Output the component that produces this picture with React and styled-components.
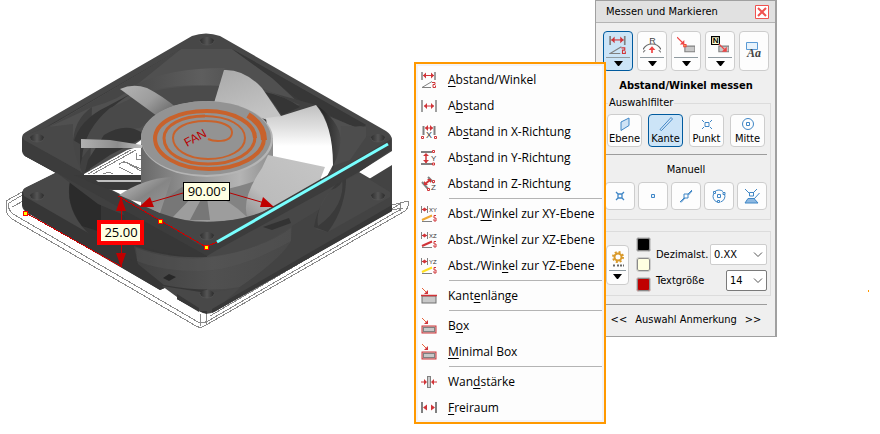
import React, { useState } from 'react';
import styled, { createGlobalStyle } from 'styled-components';

const GlobalStyle = createGlobalStyle`
    * { box-sizing: border-box; }
    body {
        margin: 0;
        background: #fff;
        color: #000;
        font-family: "DejaVu Sans Condensed", "DejaVu Sans", sans-serif;
        font-size: 11px;
        line-height: 16px;
    }
    button, select { font: inherit; color: inherit; }
`

const Workspace = styled.div`
    display: flex;
    align-items: flex-start;
    min-height: 100vh;
`

const Viewport = styled.main`
    flex: 1;
    min-width: 0;
`

const Model = styled.svg`
    display: block;
    width: 412px;
    max-width: 100%;
`

const Gutter = styled.div`
    width: 103px;
    padding: 289px 0 0 91px;
    line-height: 0;
`

const Panel = styled.aside`
    position: relative;
    width: 182px;
    background: #efefef;
    border: 1px solid #a0a0a0;
    border-right-width: 2px;
`

const TitleBar = styled.header`
    display: flex;
    align-items: center;
    justify-content: space-between;
    height: 22px;
    padding: 0 6px 0 10px;
    background: #e1e1e1;
    border-bottom: 1px solid #b4b4b4;
`

const CloseButton = styled.button`
    display: flex;
    padding: 0;
    border: none;
    background: none;
`

const PanelBody = styled.div`
    padding: 8px 4px 8px 5px;
`

const Toolbar = styled.div`
    display: flex;
    gap: 4px;
    padding: 0 2px;
`

const PushButton = styled.button`
    display: flex;
    flex-direction: column;
    align-items: center;
    justify-content: center;
    flex: ${props => props.$width ? 'none' : 1};
    width: ${props => props.$width || 'auto'};
    height: ${props => props.$height};
    min-width: 0;
    padding: 0;
    border: 1px solid ${props => props.$active ? '#005a9e' : '#cdcdcd'};
    border-radius: 4px;
    background: ${props => props.$active ? '#cce4f7' : '#fdfdfd'};
    line-height: 14px;
`

const Split = styled.span`
    display: flex;
    justify-content: center;
    width: calc(100% - 4px);
    margin-top: 3px;
    padding-top: 3px;
    border-top: 1px solid #8f9aa0;
`

const Heading = styled.h2`
    margin: 7px 0 3px;
    font-size: 11px;
    line-height: 16px;
    text-align: center;
`

const Group = styled.fieldset`
    min-width: 0;
    margin: 0;
    padding: ${props => props.$padding};
    border: 1px solid #dcdcdc;
`

const Legend = styled.legend`
    margin-left: 3px;
    padding: 0 1px;
    line-height: 12px;
`

const ButtonRow = styled.div`
    display: flex;
    gap: ${props => props.$gap};
    padding: 0 ${props => props.$inset || '0'};
`

const Rule = styled.hr`
    height: 1px;
    margin: ${props => props.$margin};
    border: none;
    background: #9c9c9c;
`

const SubHeading = styled.div`
    margin-bottom: 4px;
    text-align: center;
`

const Settings = styled(Group)`
    display: flex;
    align-items: center;
    gap: 7px;
    margin-top: 11px;
`

const Swatches = styled.div`
    display: flex;
    flex-direction: column;
    gap: 5px;
`

const Swatch = styled.button`
    width: 15px;
    height: 15px;
    padding: 0;
    border: 1px solid #cdcdcd;
    border-radius: 3px;
    background: ${props => props.$color};
    box-shadow: inset 0 0 0 1px #8a8a8a;
`

const Fields = styled.div`
    display: flex;
    flex: 1;
    flex-direction: column;
    align-self: flex-end;
    gap: 5px;
    padding-bottom: 1px;
    margin-left: -2px;
`

const Field = styled.div`
    display: flex;
    align-items: center;
    justify-content: space-between;
`

const SelectBox = styled.span`
    position: relative;
    display: flex;
    width: ${props => props.$width};

    svg {
        position: absolute;
        top: 8px;
        right: 4px;
        pointer-events: none;
    }
`

const Select = styled.select`
    appearance: none;
    width: 100%;
    height: 21px;
    padding: 0 0 0 3px;
    border: 1px solid ${props => props.$strong ? '#7a7a7a' : '#cdcdcd'};
    border-radius: 2px;
    background: #fff;
`

const Footer = styled.footer`
    display: flex;
    align-items: center;
    justify-content: center;
    gap: 8px;
`

const PlainButton = styled.button`
    padding: 0;
    border: none;
    background: none;
`

const Menu = styled.div`
    position: absolute;
    top: 61px;
    right: 169px;
    width: 192px;
    padding: 3px 0 1px;
    border: 2px solid #ff9900;
    background: #fdfdfd;
    box-shadow: inset 0 0 0 2px #f3f3f7;
    font-family: "Open Sans", "Noto Sans", sans-serif;
    font-size: 12px;
`

const MenuItem = styled.button`
    display: flex;
    align-items: center;
    gap: 11px;
    width: 100%;
    height: 26px;
    padding: 0 5px;
    border: none;
    background: none;
    text-align: left;
    white-space: nowrap;

    u { text-underline-offset: 2px; }
`

const Separator = styled.div`
    height: 4px;
    margin: 0 2px 0 33px;
    background: linear-gradient(#b4b4b4, #b4b4b4) 0 1px / 100% 1px no-repeat;
`

const red = '#d13438';
const grey = '#808080';
const blue = '#3f86c6';

function Icon({ size = 16, children }) {
    return (
        <svg width={size} height={size} viewBox="0 0 16 16" fill="none" stroke={grey} aria-hidden="true">
            {children}
        </svg>
    );
}

function Letter({ x, y, size = 8, color = '#444', children, ...rest }) {
    return (
        <text x={x} y={y} fontSize={size} fill={color} stroke="none" fontFamily="Liberation Sans, sans-serif" {...rest}>
            {children}
        </text>
    );
}

function DownArrow() {
    return <svg width="9" height="5" aria-hidden="true"><path d="M0 0h9L5 5H4z" fill="#000" /></svg>;
}

function Chevron() {
    return <svg width="10" height="6" aria-hidden="true"><path d="M1 .5L5 4.5 9 .5" fill="none" stroke="#555" /></svg>;
}

// double headed arrow between two limits
function Span({ y = 4.5, a = 2, b = 13 }) {
    return (
        <>
            <path d={`M${a} ${y}H${b}`} stroke={red} />
            <path d={`M${a} ${y}l3-3v6zM${b} ${y}l-3-3v6z`} fill={red} stroke="none" />
        </>
    );
}

function AngleIcon({ size }) {
    return (
        <Icon size={size}>
            <path d="M1 0v8M14 0v8" strokeWidth="1.5" />
            <Span y={3.5} a={2} b={13} />
            <path d="M11 9.5L1 15.5H10" />
            <path d="M11 10.5h3v2h-2v3h2.5v-2" stroke={red} />
        </Icon>
    );
}

function DistanceIcon() {
    return (
        <Icon>
            <path d="M1 2v12M15 2v12" strokeWidth="1.5" />
            <Span y={8} a={3} b={13} />
        </Icon>
    );
}

function XIcon() {
    return (
        <Icon>
            <path d="M2.5 2v9M13.5 2v9" strokeWidth="2" />
            <Span y={4} a={4} b={12} />
            <Letter x={5} y={14} size={9}>X</Letter>
            <path d="M.5 12.5h2v2h-2zM13.5 12.5h2v2h-2z" fill="#fff" stroke={red} />
        </Icon>
    );
}

function YIcon() {
    return (
        <Icon>
            <path d="M0 2h11M0 14h11" strokeWidth="2" />
            <path d="M5 4v9" stroke={red} strokeWidth="1.5" />
            <path d="M5 3l3 3H2zM5 13l3-3H2z" fill={red} stroke="none" />
            <Letter x={10} y={11} size={8}>Y</Letter>
            <path d="M11.5 .5h2v2h-2zM11.5 13h2v2h-2z" fill="#fff" stroke={red} />
        </Icon>
    );
}

function ZIcon() {
    return (
        <Icon>
            <path d="M1 6l7 8M7 1l6 6" strokeWidth="2" />
            <path d="M4 8l5-4" stroke={red} strokeWidth="2" />
            <path d="M3 5v4h4zM6 3h4v4z" fill={red} stroke="none" />
            <Letter x={10} y={14} size={8}>Z</Letter>
            <path d="M11.5 4.5h2v2h-2zM6.5 12.5h2v2h-2z" fill="#fff" stroke={red} />
        </Icon>
    );
}

function PlaneIcon({ axes, color }) {
    return (
        <Icon>
            <path d="M.5 0v7M6.5 0v7" />
            <path d="M1 3.5h5" stroke={red} />
            <path d="M1 3.5l2.5-2v4zM6 3.5l-2.5-2v4z" fill={red} stroke="none" />
            <Letter x={8} y={6} size={6} color="#333">{axes}</Letter>
            <path d="M1 14L11 9.5" stroke={color} strokeWidth="2" />
            <path d="M1 15.5h10" />
            <path d="M15 9.5h-2v2.5h2v3h-2v-2" stroke={red} />
        </Icon>
    );
}

function BoxIcon({ outline }) {
    return (
        <Icon>
            <path d="M1 0l5 5" stroke="#e8643c" />
            <path d="M7 6H3l4-4z" fill={red} stroke="none" />
            <rect x="1" y="8" width="14" height="7" fill="#c8c8c8" stroke={outline ? red : '#707070'} />
            {outline ? <rect x="2.5" y="9.5" width="11" height="4" /> : <path d="M0 7.5h16" stroke={red} strokeWidth="1.5" />}
        </Icon>
    );
}

function WallIcon() {
    return (
        <Icon>
            <rect x="6.5" y="2.5" width="3" height="11" fill="#ccc" />
            <path d="M0 8h4M12 8h4" stroke={red} />
            <path d="M6 8L3 5v6zM10 8l3-3v6z" fill={red} stroke="none" />
        </Icon>
    );
}

function GapIcon() {
    return (
        <Icon>
            <path d="M1 2v11M15 2v11" strokeWidth="2" />
            <path d="M2 7.5l4-3v6zM14 7.5l-4-3v6z" fill={red} stroke="none" />
        </Icon>
    );
}

function RadiusIcon() {
    return (
        <Icon size={18}>
            <Letter x={5.5} y={7}>R</Letter>
            <path d="M0 12a9 9 0 0 1 16 0" stroke="#666" />
            <path d="M8 15v-4" stroke="#ef4444" strokeWidth="1.5" />
            <path d="M8 9l3 3.5H5z" fill="#ef4444" stroke="none" />
            <path d="M0 14.5l2-2M16 14.5l-2-2" />
        </Icon>
    );
}

function PointNoteIcon({ flag }) {
    return (
        <Icon size={18}>
            <path d="M7 9h9v5H7z" fill="#c8c8c8" />
            {flag ? (
                <>
                    <path d="M.5 .5h7v7h-7z" fill="#ffffd0" stroke="#000" />
                    <Letter x={1.5} y={6.5} size={7} color="#000" fontWeight="bold">N</Letter>
                    <path d="M7 7l5 5" stroke="#ef4444" />
                    <path d="M14 14H9.5L14 9.5z" fill="#ef4444" stroke="none" />
                </>
            ) : (
                <>
                    <path d="M0 1l5 5" stroke="#ef4444" />
                    <path d="M6.5 7.5H2.5l4-4z" fill="#ef4444" stroke="none" />
                    <path d="M6 7.5h2v2H6z" fill="#ffd34d" stroke="#ef4444" />
                </>
            )}
        </Icon>
    );
}

function LabelIcon() {
    return (
        <svg width="20" height="20" fill="none" aria-hidden="true">
            <path d="M2.5 1.5h11v7h-11z" fill="#e8f3fc" stroke="#5b9bd5" />
            <Letter x={3} y={16} size={12} fontFamily="Liberation Serif, serif" fontWeight="bold" fontStyle="italic">Aa</Letter>
        </svg>
    );
}

const filterIcons = {
    Ebene: <path d="M4 6l8-4v7.5l-8 5z" fill="#cfe3f5" stroke={blue} />,
    Kante: <path d="M2 13.5L13 1.5l1.5 1.5L3.5 14.5z" fill="#dbeaf8" stroke={blue} />,
    Punkt: <path d="M6 6.5h4v4H6zM3 4l2 2M13 4L11 6M3 13l2-2M13 13L11 11" stroke={blue} />,
    Mitte: <path d="M6.5 6.5h3v3h-3zM8 2.5a5.5 5.5 0 1 1 0 11a5.5 5.5 0 1 1 0-11z" stroke={blue} />,
};

const manualIcons = [
    ['Schnittpunkt', <path d="M6 6h4v4H6zM4 4l2 2M12 4l-2 2M4 12l2-2M12 12l-2-2" stroke={blue} strokeWidth="1.3" />],
    ['Punkt', <path d="M6.5 6.5h3v3h-3z" stroke={blue} fill="#e8f3fc" />],
    ['Mittelpunkt', <path d="M6 6h4v4H6zM2 14l4-4M3 14.5l4-4.5M10 6l4-4M10.5 7L14 3" stroke={blue} />],
    ['Kreismitte', <path d="M6.5 6.5h3v3h-3zM4 3.5a6 6 0 0 1 8 0M13.5 6a6 6 0 0 1-4 8M6 14A6 6 0 0 1 2.5 6M2.5 3.5h2v2h-2zM12 4.5h2v2h-2zM6.5 12.5h2v2h-2z" stroke={blue} />],
    ['Projektion', (
        <>
            <path d="M1 1l4 4M13 1l-4 4M5.5 4.5h4v3.5h-4zM15.5 5L10 11" stroke={blue} />
            <path d="M4 10.5h6l4 4.5H1z" fill="#8db9e2" stroke={blue} />
        </>
    )],
];

// mnemonic letter is the middle entry of the label
const menuGroups = [
    [
        [<AngleIcon />, ['', 'A', 'bstand/Winkel']],
        [<DistanceIcon />, ['A', 'b', 'stand']],
        [<XIcon />, ['Ab', 's', 'tand in X-Richtung']],
        [<YIcon />, ['Abs', 't', 'and in Y-Richtung']],
        [<ZIcon />, ['Absta', 'n', 'd in Z-Richtung']],
    ],
    [
        [<PlaneIcon axes="XY" color="#f0a830" />, ['Abst./', 'W', 'inkel zur XY-Ebene']],
        [<PlaneIcon axes="XZ" color="#d13438" />, ['Abst./W', 'i', 'nkel zur XZ-Ebene']],
        [<PlaneIcon axes="YZ" color="#ffe020" />, ['Abst./Win', 'k', 'el zur YZ-Ebene']],
    ],
    [
        [<BoxIcon />, ['Kant', 'e', 'nlänge']],
    ],
    [
        [<BoxIcon outline />, ['B', 'o', 'x']],
        [<BoxIcon outline />, ['', 'M', 'inimal Box']],
    ],
    [
        [<WallIcon />, ['Wan', 'd', 'stärke']],
        [<GapIcon />, ['', 'F', 'reiraum']],
    ],
];

const tools = [
    ['Abstand/Winkel', <AngleIcon size={18} />, true],
    ['Radius', <RadiusIcon />, true],
    ['Punktnotiz', <PointNoteIcon />, true],
    ['Anmerkung', <PointNoteIcon flag />, true],
    ['Text', <LabelIcon />, false],
];

function Hole({ x, y }) {
    return (
        <g>
            <ellipse cx={x} cy={y} rx="7" ry="4" fill="url(#hole)" />
            <path d={`M${x - 7} ${y}a7 4 0 0 0 14 0`} fill="none" stroke="#555" strokeWidth=".7" />
        </g>
    );
}

function FanModel() {
    return (
        <Model viewBox="0 0 412 434" role="img" aria-label="Lüfter mit Bemaßung">
            <defs>
                <linearGradient id="hole"><stop offset="0" stopColor="#2e2e2e" /><stop offset=".5" stopColor="#555" /><stop offset="1" stopColor="#2c2c2c" /></linearGradient>
                <linearGradient id="hub"><stop offset="0" stopColor="#686868" /><stop offset=".35" stopColor="#929292" /><stop offset=".75" stopColor="#b4b4b4" /><stop offset="1" stopColor="#8c8c8c" /></linearGradient>
                <linearGradient id="bladeA" x1="0" y1="0" x2="1" y2=".6"><stop offset="0" stopColor="#b4b4b4" /><stop offset=".6" stopColor="#9c9c9c" /><stop offset="1" stopColor="#707070" /></linearGradient>
                <linearGradient id="bladeB"><stop offset="0" stopColor="#b0b0b0" /><stop offset=".6" stopColor="#8c8c8c" /><stop offset="1" stopColor="#c0c0c0" /></linearGradient>
                <linearGradient id="bladeC" x1="0" y1="0" x2=".5" y2="1"><stop offset="0" stopColor="#a9a9a9" /><stop offset="1" stopColor="#c4c4c4" /></linearGradient>
                <linearGradient id="bladeD" x1="0" y1="0" x2="0" y2="1"><stop offset="0" stopColor="#c0c0c0" /><stop offset=".3" stopColor="#e0e0e0" /><stop offset=".55" stopColor="#fff" /><stop offset="1" stopColor="#fff" /></linearGradient>
                <linearGradient id="bladeE" x1="1" y1="0" x2="0" y2="1"><stop offset="0" stopColor="#c6c6c6" /><stop offset=".7" stopColor="#bcbcbc" /><stop offset="1" stopColor="#8f8f8f" /></linearGradient>
                <linearGradient id="bladeF" x1="0" y1="0" x2="1" y2="1"><stop offset="0" stopColor="#c4c4c4" /><stop offset=".5" stopColor="#858585" /><stop offset="1" stopColor="#9a9a9a" /></linearGradient>
                <linearGradient id="boreR"><stop offset="0" stopColor="#202020" /><stop offset="1" stopColor="#4c4c4c" /></linearGradient>
                <linearGradient id="boreTop"><stop offset="0" stopColor="#484848" /><stop offset=".55" stopColor="#5e5e5e" /><stop offset="1" stopColor="#484848" /></linearGradient>
                <linearGradient id="duct"><stop offset="0" stopColor="#404040" /><stop offset=".5" stopColor="#505050" /><stop offset="1" stopColor="#484848" /></linearGradient>
            </defs>

            {/* bounding wire frame */}
            <g fill="none" stroke="#8a8a8a" strokeWidth="1" shapeRendering="crispEdges">
                <path d="M22 192L6 201V210Q7 215 12 219L196 326Q201 329 206 325L405 211Q409 208 408 201L392 205" />
                <path d="M24 194L9 203Q7 209 13 214L198 322Q202 324 208 321L403 208L392 210" />
                <path d="M25 200L12 207M200 314V326M206 312V325M210 316L400 204V211" />
            </g>

            {/* lower and upper frame silhouette */}
            <path fill="#474747" d="M22 138Q22 134 26 132L192 36Q206 31 220 36L386 131Q392 135 392 140V151L359 172L388 189Q392 192 392 196V211L214 312Q206 316 199 311L177 299V294L167 287L160 290L26 212Q22 209 22 205V192Q23 189 27 187L56 173L25 156Q22 154 22 150Z" />
            <path fill="#363636" d="M22 139L207 249V314L199 311 177 299V294L167 287 160 290 26 212 22 205V192L56 173 25 156 22 150Z" />

            {/* lower plate, left corner */}
            <path fill="#484848" d="M23 192Q22 189 27 187L57 172L90 190V234L24 196Z" />
            <path fill="#363636" d="M70 181Q64 211 91 236L160 277V221L118 196Z" />
            <path fill="#2b2b2b" d="M70 182Q66 205 82 226L101 232V205Z" />
            <path fill="#404040" d="M57 173L92 190 118 196 160 221 207 247V257L140 222 98 204Z" />
            <path fill="#373737" d="M118 197L207 249V260L160 252 133 244Z" />

            {/* duct between the two plates */}
            <path fill="url(#duct)" d="M134 246Q168 259 207 257Q258 252 292 226L291 242Q282 258 240 287Q206 293 164 285L138 264Z" />
            <path fill="#5a5a5a" opacity=".35" d="M136 248Q180 264 220 256Q266 247 291 228V241Q240 270 200 271Q160 271 137 261Z" />
            <path fill="#434343" d="M292 226L392 165V210L214 312L240 287Q282 258 291 241Z" />
            <path fill="#494949" d="M346 180L359 173L390 192V197L328 232L315 229Q345 215 346 180Z" />
            <path fill="#3a3a3a" d="M346 174Q347 206 328 232L314 227Q318 200 346 174Z" />
            <path fill="#505050" d="M331 190Q343 186 342 178Q346 206 318 226Q315 208 331 190Z" opacity=".6" />
            <path fill="#333" d="M263 227L289 218 291 223 272 230Z" />
            <path fill="#484848" d="M162 286L207 293 240 288 214 311H200L177 297Z" />
            <path fill="#383838" d="M177 294L199 308V312L177 299ZM392 205V211L212 313V309Z" />
            <path fill="#282828" d="M165 222L171 218 176 221 169 224ZM163 278L169 274 176 277 169 281Z" />

            {/* upper plate recess and bore */}
            <path fill="#3a3a3a" d="M46 127L181 49H232L366 125 352 137 210 54Z" />
            <path fill="#505050" d="M48 127L181 49H232L272 78 300 104 350 125 366 127V137L345 170 270 205H150L80 172Z" />
            <path fill="#373737" d="M232 49L366 125 355 127 310 106Q290 95 275 80Z" />
            <path fill="#464646" d="M49 127L181 49L139 83Q120 100 92 107Z" />
            <path fill="url(#boreTop)" d="M137 84Q170 68 224 68L262 88 220 86Q165 82 128 97Z" />
            <path fill="#404040" d="M92 107Q73 120 73 145Q75 165 84 175L141 150L165 112 207 86 262 90 316 105 341 145 325 183 260 215 160 220 118 196 90 170Z" />
            <path fill="#4b4b4b" d="M129 99Q170 80 262 88L300 105 200 120 115 120Z" />
            <path fill="#353535" d="M73 145Q78 120 108 106L134 92Q100 112 88 138L80 165Z" />
            <path fill="#494949" d="M110 108L135 97 157 115 140 128Q100 130 82 158Q84 130 110 108Z" />
            <path fill="#353535" d="M265 92Q285 96 300 107L282 115ZM88 160L104 135Q125 122 141 132V139L110 155 85 172Z" />
            <path fill="url(#boreR)" d="M318 106Q344 125 341 148Q338 165 331 178L333 160Q332 125 318 106Z" />

            {/* blades */}
            <path fill="url(#bladeA)" d="M120 89Q133 83 147 88Q161 95 177 108L157 116Z" />
            <path fill="url(#bladeC)" d="M224 70Q244 69 262 88L281 116 271 121 214 103Z" />
            <path fill="url(#bladeD)" d="M281 116L316 105Q333 125 333 165L325 180 272 165 266 118Z" />
            <path fill="#838383" d="M142 150H272V216L204 223H172L150 207Z" />
            <path fill="url(#hub)" d="M141 138V186Q190 204 258 180L273 160V138Z" />
            <path fill="url(#bladeE)" d="M268 155L325 167 318 185 275 208 248 219Q240 200 262 168Z" />
            <path fill="#9d9d9d" d="M172 218Q182 196 204 190Q230 200 247 217Q215 225 172 218Z" />
            <path fill="#777" d="M190 220L206 190 210 220ZM150 210L182 187 196 193 172 218Z" />

            {/* hub cap */}
            <ellipse cx="207" cy="139" rx="66" ry="38" fill="#b5b5b5" />
            <ellipse cx="206" cy="138" rx="65" ry="37" fill="#939393" />
            <g fill="none" stroke="#c8622c">
                <path d="M248 115Q264 125 264 140" strokeWidth="6" />
                <path d="M264 138C264 156 238 169 209 169C178 169 155 155 155 138" strokeWidth="4" />
                <path d="M155 139C155 122 178 111 207 111C235 111 255 124 255 138" strokeWidth="4" />
                <path d="M255 137C255 153 234 164 208 164C182 164 164 153 164 138C164 125 182 116 205 116" strokeWidth="3" />
                <path d="M204 116C229 116 245 126 245 138C245 150 229 159 208 159C187 159 173 149 173 138C173 128 187 121 205 121C222 121 232 126 232 132C232 139 225 141 218 141Q212 141 208 139" strokeWidth="2" />
            </g>
            <text x="187" y="147" transform="rotate(-29 187 147)" fontFamily="Liberation Sans, sans-serif" fontSize="12" fill="#b80000">FAN</text>

            {/* front lip of the upper plate */}
            <path fill="#3c3c3c" d="M22 138L207 244 391 139V150L359 172 217 250 207 256 57 173 25 156 22 150Z" />
            <path fill="#464646" d="M23 136L49 126L80 144V172L122 195 160 213Q184 222 207 222Q236 222 262 212L327 182 341 150 366 136 391 139L214 244Q206 249 198 244Z" />
            <path fill="#4d4d4d" d="M341 126L366 127V137L350 160 333 166Q342 150 341 126Z" />
            <path fill="#484848" d="M24 136L48 127 73 124Q71 150 82 172L24 140Z" />

            {/* open view through the duct */}
            <path fill="#fff" d="M84 174L127 150 141 146V175H84ZM134 145L141 140V146Z" />
            <g fill="none" stroke="#888" shapeRendering="crispEdges">
                <path d="M88 174L131 150M93 174L136 150M119 165Q121 161 127 163L141 171M119 167L133 174M123 161L141 169M103 174L109 172 113 174M136 153V159H141M139 155H141" />
            </g>
            <path fill="#3a3a3a" d="M74 175H141V189H108L90 182Z" />
            <path fill="#c0c0c0" d="M96 180H141V182H98Z" />
            <path fill="#fff" d="M112 190H135L122 195Z" />
            <path fill="url(#bladeF)" d="M119 195Q145 178 172 177L160 213Z" />
            <path fill="#fff" d="M131 200L141 202 141 206Z" />
            <path fill="url(#bladeB)" d="M81 139L110 140 142 145V148H81Z" />

            <Hole x={37} y={138} />
            <Hole x={207} y={41} />
            <Hole x={378} y={138} />
            <Hole x={37} y={196} />
            <Hole x={378} y={196} />
            <Hole x={207} y={236} />
            <Hole x={207} y={294} />

            {/* selected edges */}
            <path d="M217 242L388 144" stroke="#78ffff" strokeWidth="3" />
            <g fill="none" stroke="#c80000" shapeRendering="crispEdges">
                <path d="M26 213L122 267M118 196L206 247 217 242M121 198V267" />
            </g>
            <path d="M183 193L145 204M230 193L268 204" stroke="#b80000" />
            <path fill="#c00000" d="M121 197L126 211H116ZM121 267L126 253H116ZM139 207L150 197 154 207ZM274 207L263 197 260 207Z" />
            <g fill="#ffff00" stroke="#ff0000" shapeRendering="crispEdges">
                <rect x="23.5" y="211.5" width="4" height="4" />
                <rect x="158.5" y="219.5" width="4" height="4" />
                <rect x="204.5" y="245.5" width="4" height="4" />
            </g>

            {/* dimension labels */}
            <g fill="#ffffe1" shapeRendering="crispEdges">
                <rect x="183.5" y="182.5" width="46" height="18" stroke="#000" />
                <rect x="99" y="222" width="43" height="21" stroke="#ff0000" strokeWidth="4" />
            </g>
            <g fontFamily="Open Sans, sans-serif" fontSize="13" fill="#000" textAnchor="middle">
                <text x="207" y="196">90.00°</text>
                <text x="121" y="237">25.00</text>
            </g>
        </Model>
    );
}

function MeasureMenu() {
    return (
        <Menu role="menu">
            {menuGroups.map((items, index) => (
                <React.Fragment key={index}>
                    {index > 0 && <Separator role="separator" />}
                    {items.map(([icon, label]) => (
                        <MenuItem key={label.join('')} type="button" role="menuitem">
                            {icon}
                            <span>{label[0]}<u>{label[1]}</u>{label[2]}</span>
                        </MenuItem>
                    ))}
                </React.Fragment>
            ))}
        </Menu>
    );
}

function App() {
    const [filter, setFilter] = useState('Kante');
    const [tool, setTool] = useState('Abstand/Winkel');

    return (
        <>
            <GlobalStyle />
            <Workspace>
                <Viewport>
                    <FanModel />
                </Viewport>
                <Panel>
                    <TitleBar>
                        <span>Messen und Markieren</span>
                        <CloseButton type="button" aria-label="Schließen">
                            <svg width="14" height="14" fill="none" stroke="#f0524f">
                                <path d="M.5 .5h13v13H.5z" fill="#fff" />
                                <path d="M3 3l8 8M11 3l-8 8" strokeWidth="2" />
                            </svg>
                        </CloseButton>
                    </TitleBar>
                    <PanelBody>
                        <Toolbar>
                            {tools.map(([name, icon, split]) => (
                                <PushButton key={name} type="button" aria-label={name} $height="40px" $active={tool === name} onClick={() => setTool(name)}>
                                    {icon}
                                    {split && <Split><DownArrow /></Split>}
                                </PushButton>
                            ))}
                        </Toolbar>
                        <Heading>Abstand/Winkel messen</Heading>
                        <Group $padding="5px 3px 9px">
                            <Legend>Auswahlfilter</Legend>
                            <ButtonRow $gap="6px" $inset="2px">
                                {Object.keys(filterIcons).map(name => (
                                    <PushButton key={name} type="button" $height="33px" $active={filter === name} onClick={() => setFilter(name)}>
                                        <Icon>{filterIcons[name]}</Icon>
                                        {name}
                                    </PushButton>
                                ))}
                            </ButtonRow>
                            <Rule $margin="7px 0" />
                            <SubHeading>Manuell</SubHeading>
                            <ButtonRow $gap="3px">
                                {manualIcons.map(([name, icon]) => (
                                    <PushButton key={name} type="button" aria-label={name} $height="28px">
                                        <Icon>{icon}</Icon>
                                    </PushButton>
                                ))}
                            </ButtonRow>
                        </Group>
                        <Settings $padding="5px 3px 3px 4px">
                            <PushButton type="button" aria-label="Einstellungen" $width="23px" $height="40px">
                                <Icon>
                                    <circle cx="8" cy="6" r="3.5" stroke="#d99a2b" strokeWidth="2" />
                                    <circle cx="8" cy="6" r="5" stroke="#d99a2b" strokeDasharray="2 1.93" strokeWidth="2" />
                                    <path d="M3 14.5h2M7 14.5h7" stroke="#666" strokeWidth="2" strokeDasharray="2 1" />
                                </Icon>
                                <Split><DownArrow /></Split>
                            </PushButton>
                            <Swatches>
                                <Swatch type="button" aria-label="Textfarbe" $color="#000" />
                                <Swatch type="button" aria-label="Hintergrundfarbe" $color="#ffffe1" />
                                <Swatch type="button" aria-label="Linienfarbe" $color="#c00000" />
                            </Swatches>
                            <Fields>
                                <Field>
                                    <label htmlFor="decimals">Dezimalst.</label>
                                    <SelectBox $width="57px">
                                        <Select id="decimals" defaultValue="0.XX"><option>0.XX</option></Select>
                                        <Chevron />
                                    </SelectBox>
                                </Field>
                                <Field>
                                    <label htmlFor="textsize">Textgröße</label>
                                    <SelectBox $width="41px">
                                        <Select id="textsize" defaultValue="14" $strong><option>14</option></Select>
                                        <Chevron />
                                    </SelectBox>
                                </Field>
                            </Fields>
                        </Settings>
                        <Rule $margin="8px 4px 7px" />
                        <Footer>
                            <PlainButton type="button">&lt;&lt;</PlainButton>
                            <span>Auswahl Anmerkung</span>
                            <PlainButton type="button">&gt;&gt;</PlainButton>
                        </Footer>
                    </PanelBody>
                    <MeasureMenu />
                </Panel>
                <Gutter>
                    <svg width="2" height="2" aria-hidden="true"><rect width="1" height="2" fill="#ff9900" /></svg>
                </Gutter>
            </Workspace>
        </>
    );
}

export default App;
